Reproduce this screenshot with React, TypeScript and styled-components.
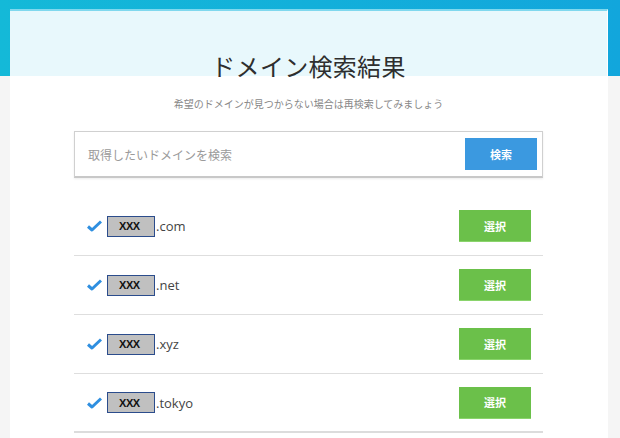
import styled, { createGlobalStyle } from "styled-components";

const GlobalStyle = createGlobalStyle`
  html, body {
    margin: 0;
    padding: 0;
    background: #f5f5f5;
    font-family: "Noto Sans CJK JP", "Noto Sans", sans-serif;
  }
`;

const Page = styled.div`
  height: 438px;
  overflow: hidden;
  background: linear-gradient(to bottom, transparent 76px, #f5f5f5 76px),
    linear-gradient(to right, #14b9d8, #12a6dc);
  padding: 9px 12px 0 10px;
`;

const Card = styled.div`
  width: 597px;
  min-height: 460px;
  border-top: 2px solid #7fd8ee;
  border-right: 1px solid #ffffff;
  background: linear-gradient(to bottom, #e8f8fc 0 65px, #ffffff 65px);
  display: flex;
  flex-direction: column;
  align-items: center;
`;

const Title = styled.h1`
  margin: 39px 0 0;
  font-size: 24px;
  font-weight: 400;
  line-height: 32px;
  color: #2e2e2e;
  letter-spacing: 0.3px;
`;

const Lead = styled.p`
  margin: 15px 0 0;
  font-size: 10px;
  line-height: 14px;
  color: #888;
`;

const SearchBox = styled.div`
  margin-top: 20px;
  width: 469px;
  height: 47px;
  box-sizing: border-box;
  border: 1px solid #d0d0d0;
  border-bottom: 2px solid #c8c8c8;
  box-shadow: 0 1px 2px rgba(0, 0, 0, 0.08);
  background: #fff;
  display: flex;
  align-items: center;
  justify-content: space-between;
  padding: 0 5px 0 13px;
`;

const Placeholder = styled.span`
  font-size: 12px;
  color: #9a9a9a;
`;

const SearchButton = styled.button`
  width: 72px;
  height: 32px;
  border: none;
  background: #3b99e0;
  color: #fff;
  font-family: inherit;
  font-size: 11px;
  font-weight: 700;
`;

const List = styled.div`
  margin-top: 19px;
  width: 469px;
  display: flex;
  flex-direction: column;
`;

const Row = styled.div<{ last?: boolean }>`
  height: 59px;
  box-sizing: border-box;
  border-bottom: ${(p) => (p.last ? "2px solid #dcdcdc" : "1px solid #dedede")};
  display: flex;
  align-items: center;
  padding: 0 12px 0 13px;
`;

const Check = styled.svg`
  width: 15px;
  height: 12px;
  margin-right: 5px;
  flex: none;
`;

const Masked = styled.span`
  width: 48px;
  height: 21px;
  box-sizing: border-box;
  border: 1px solid #2b4c8c;
  background: #c0c0c0;
  display: flex;
  align-items: center;
  padding-left: 11px;
  font-family: "Liberation Sans", Arial, sans-serif;
  font-size: 11px;
  font-weight: 700;
  letter-spacing: -0.4px;
  color: #111;
`;

const Tld = styled.span`
  font-family: "Open Sans", "Liberation Sans", sans-serif;
  font-size: 13px;
  color: #444;
  margin-left: 1px;
`;

const SelectButton = styled.button`
  margin-left: auto;
  width: 72px;
  height: 32px;
  border: none;
  border-bottom: 1px solid #8ad46c;
  background: #6bc04a;
  color: #fff;
  font-family: inherit;
  font-size: 11px;
  font-weight: 700;
`;

const domains = [".com", ".net", ".xyz", ".tokyo"];

export default function App() {
  return (
    <>
      <GlobalStyle />
      <Page>
        <Card>
          <Title>ドメイン検索結果</Title>
          <Lead>希望のドメインが見つからない場合は再検索してみましょう</Lead>
          <SearchBox>
            <Placeholder>取得したいドメインを検索</Placeholder>
            <SearchButton>検索</SearchButton>
          </SearchBox>
          <List>
            {domains.map((tld, i) => (
              <Row key={tld} last={i === domains.length - 1}>
                <Check viewBox="0 0 15 12">
                  <path d="M1 6.5 L5 10 L14 1.5" fill="none" stroke="#2f8fe0" strokeWidth="3" strokeLinejoin="round" />
                </Check>
                <Masked>XXX</Masked>
                <Tld>{tld}</Tld>
                <SelectButton>選択</SelectButton>
              </Row>
            ))}
          </List>
        </Card>
      </Page>
    </>
  );
}
